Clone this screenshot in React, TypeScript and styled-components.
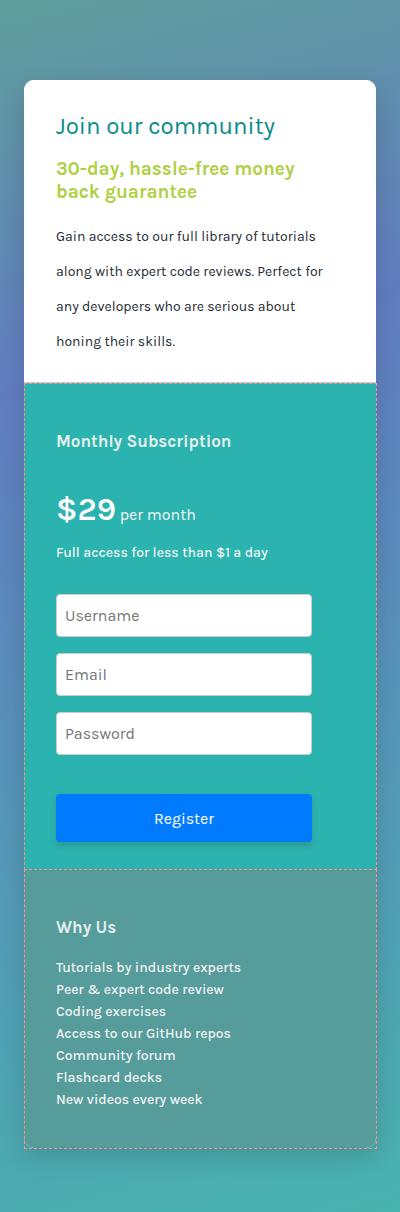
import React from "react";
import styled, { createGlobalStyle } from "styled-components";

const GlobalStyle = createGlobalStyle`
  *, *::before, *::after { box-sizing: border-box; }
  body {
    margin: 0;
    font-family: Karla, Inter, "Liberation Sans", sans-serif;
    font-size: 14px;
    color: #1d2b33;
  }
  h1, h2, h3, p, ul { margin: 0; padding: 0; }
`;

const Page = styled.main`
  min-height: 100vh;
  padding: 80px 24px 64px;
  background: linear-gradient(165deg, #5f9f9c 0%, #617dc1 30%, #48b2ae 100%);
`;

const Card = styled.article`
  max-width: 640px;
  margin: 0 auto;
  border-radius: 10px;
  background: #ffffff;
  box-shadow: 0 8px 24px rgba(0, 0, 0, 0.15);
`;

const Intro = styled.header`
  padding: 32px 32px 23px;
  border-bottom: 1px solid #cccccc;
  border-radius: 10px 10px 0 0;
  background: #ffffff;
`;

const Title = styled.h1`
  color: #088b8b;
  font-size: 24px;
  font-weight: 450;
  line-height: 28px;
`;

const Guarantee = styled.h2`
  margin-top: 18px;
  max-width: 256px;
  color: #b0cf45;
  font-size: 19px;
  font-weight: 700;
  line-height: 23px;
`;

const Lead = styled.p`
  max-width: 284px;
  margin-top: 15px;
  font-weight: 450;
  line-height: 35px;
`;

const Panel = styled.section<{ $tone: string; $last?: boolean }>`
  position: relative;
  padding: ${(p) => (p.$last ? "46px 32px 37px" : "46px 32px 27px")};
  border-radius: ${(p) => (p.$last ? "0 0 10px 10px" : "0")};
  background: ${(p) => p.$tone};
  color: #f5f5f5;
  font-weight: 500;

  &::after {
    content: "";
    position: absolute;
    inset: 0 -1px -1px 0;
    border: 1px dashed #ff8f8a;
    pointer-events: none;
  }
`;

const PanelTitle = styled.h3`
  color: #e6eeec;
  font-size: 17px;
  font-weight: 700;
  line-height: 24px;
`;

const Price = styled.p`
  margin-top: 37px;
  font-size: 16px;
  font-weight: 450;
  line-height: 40px;
`;

const Amount = styled.strong`
  color: #ffffff;
  font-size: 32px;
  font-weight: 600;
`;

const Note = styled.p`
  margin-top: 7px;
  line-height: 22px;
`;

const Form = styled.form`
  display: flex;
  flex-direction: column;
  gap: 16px;
  width: 256px;
  max-width: 100%;
  margin-top: 30px;
`;

const Field = styled.input`
  width: 100%;
  height: 43px;
  padding: 0 8px;
  border: 1px solid #cccccc;
  border-radius: 4px;
  background: #ffffff;
  color: #1d2b33;
  font: inherit;
  font-size: 16px;
  font-weight: 400;

  &::placeholder { color: #757575; }
`;

const Submit = styled.button`
  height: 48px;
  margin-top: 23px;
  border: 0;
  border-radius: 4px;
  background: #007bff;
  box-shadow: 0 4px 6px rgba(50, 50, 50, 0.2);
  color: #ffffff;
  font: inherit;
  font-size: 16px;
  font-weight: 450;
`;

const Reasons = styled.ul`
  margin-top: 18px;
  list-style: none;
  line-height: 22px;
`;

const fields = [
  { type: "text", label: "Username" },
  { type: "email", label: "Email" },
  { type: "password", label: "Password" },
];

const reasons = [
  "Tutorials by industry experts",
  "Peer & expert code review",
  "Coding exercises",
  "Access to our GitHub repos",
  "Community forum",
  "Flashcard decks",
  "New videos every week",
];

export default function App() {
  return (
    <>
      <GlobalStyle />
      <Page>
        <Card>
          <Intro>
            <Title>Join our community</Title>
            <Guarantee>30-day, hassle-free money back guarantee</Guarantee>
            <Lead>
              Gain access to our full library of tutorials along with expert
              code reviews. Perfect for any developers who are serious about
              honing their skills.
            </Lead>
          </Intro>
          <Panel $tone="#2bb3af">
            <PanelTitle>Monthly Subscription</PanelTitle>
            <Price>
              <Amount>$29</Amount> per month
            </Price>
            <Note>Full access for less than $1 a day</Note>
            <Form onSubmit={(e) => e.preventDefault()}>
              {fields.map((f) => (
                <Field
                  key={f.label}
                  type={f.type}
                  placeholder={f.label}
                  aria-label={f.label}
                />
              ))}
              <Submit type="submit">Register</Submit>
            </Form>
          </Panel>
          <Panel $tone="#559c9b" $last>
            <PanelTitle>Why Us</PanelTitle>
            <Reasons>
              {reasons.map((r) => (
                <li key={r}>{r}</li>
              ))}
            </Reasons>
          </Panel>
        </Card>
      </Page>
    </>
  );
}
